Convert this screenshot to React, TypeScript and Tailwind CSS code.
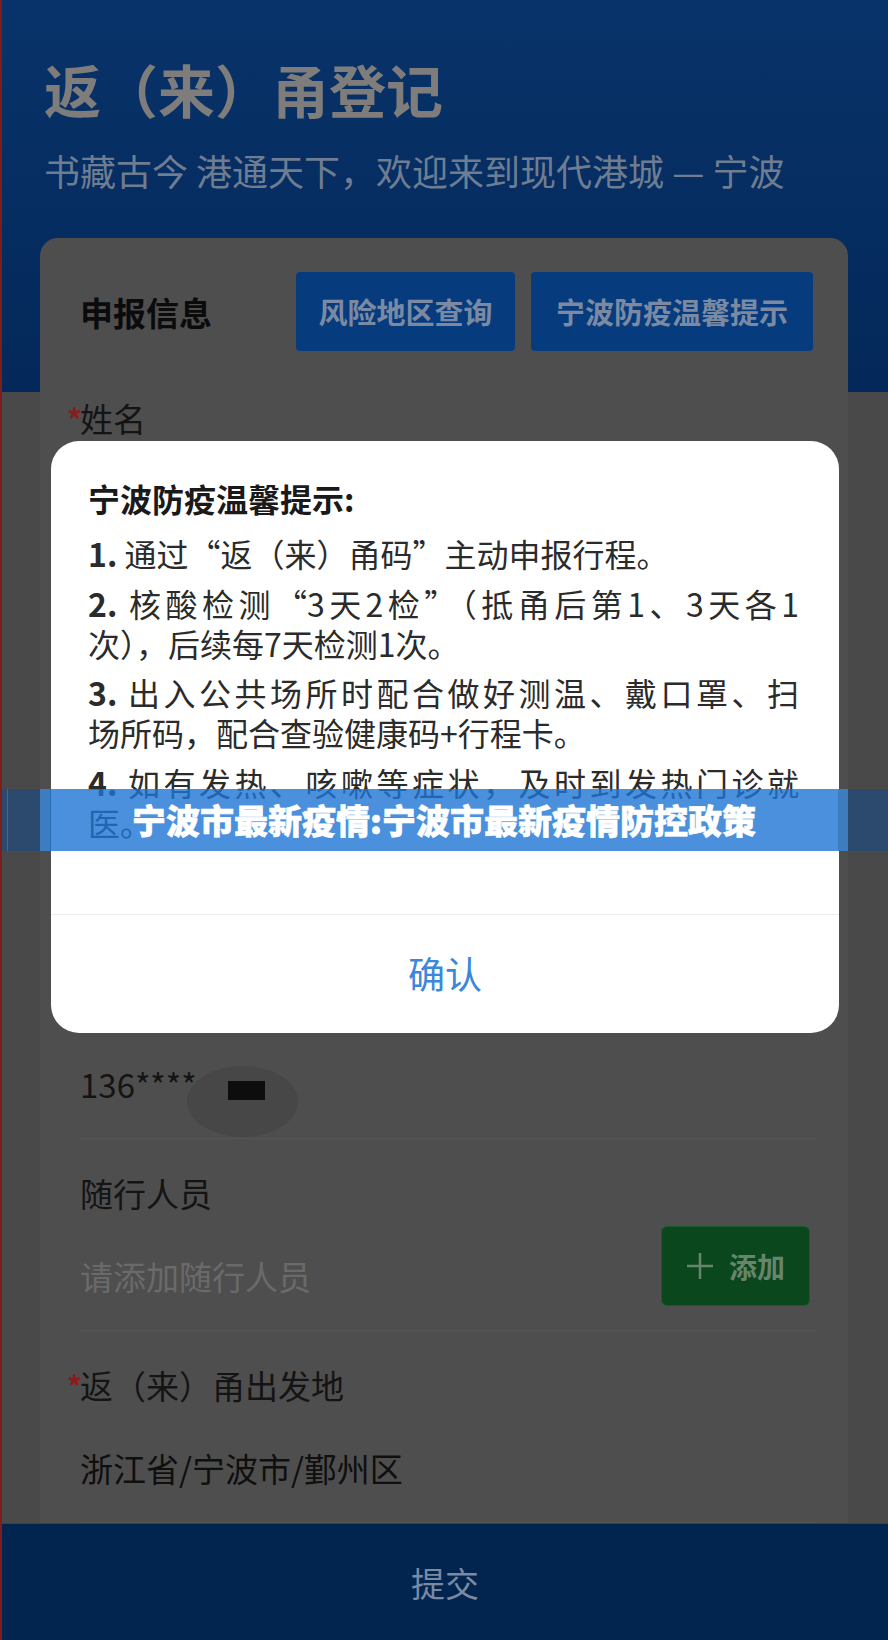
import React from "react";

function Field({
  label,
  required,
  children,
  top = "pt-[34px]",
}: {
  label: string;
  required?: boolean;
  children: React.ReactNode;
  top?: string;
}) {
  return (
    <div className={`${top} pb-[13px] border-b border-[#565656]`}>
      <div className="h-[40px] flex items-center text-[33px] leading-[40px] text-[#141414] -ml-[13px]">
        <span className="w-[13px] h-[40px] flex items-center text-[#8c1c1c] text-[30px] leading-[40px] font-bold">
          {required ? "*" : ""}
        </span>
        <span>{label}</span>
      </div>
      <div className="relative mt-[24px] h-[80px] flex items-center">{children}</div>
    </div>
  );
}

export default function App() {
  return (
    <div className="relative w-[888px] h-[1640px] overflow-hidden border-l-2 border-[#7d1d1d] bg-[linear-gradient(to_bottom,#08336a_0px,#042859_392px,#494949_392px)] font-['Noto_Sans_CJK_SC','Noto_Sans',sans-serif] flex flex-col">
      {/* Header */}
      <header className="pl-[42px] pt-[56px] shrink-0">
        <h1 className="text-[57px] leading-[64px] font-bold text-[#7f7d7b]">返（来）甬登记</h1>
        <p className="mt-[30px] text-[36px] leading-[40px] text-[#6e7d91]">
          书藏古今 港通天下，欢迎来到现代港城 — 宁波
        </p>
      </header>

      {/* Card */}
      <main className="mt-[48px] ml-[38px] w-[808px] flex-1 min-h-0 overflow-hidden rounded-t-[18px] bg-[#4e4e4e] pl-[40px] pr-[33px]">
        <div className="pt-[34px] flex items-center justify-between">
          <h2 className="text-[33px] leading-[40px] font-bold text-[#0b0b0b]">申报信息</h2>
          <div className="flex gap-[16px] mr-[2px]">
            <button className="w-[219px] h-[79px] rounded-[4px] bg-[#063c7e] text-[29px] font-bold text-[#7b8aa2]">
              风险地区查询
            </button>
            <button className="w-[282px] h-[79px] rounded-[4px] bg-[#063c7e] text-[29px] font-bold text-[#7b8aa2]">
              宁波防疫温馨提示
            </button>
          </div>
        </div>

        <div className="pt-[13px]">
          <Field label="姓名" required>
            <span className="text-[33px] text-[#141414]">王**</span>
          </Field>
          <Field label="证件类型" required>
            <span className="text-[33px] text-[#141414]">居民身份证</span>
          </Field>
          <Field label="证件号码" required top="pt-[41px]">
            <span className="text-[33px] text-[#141414]">3302**********1234</span>
          </Field>
          <Field label="手机号码" required>
            <div className="absolute left-[107px] top-[21px] w-[111px] h-[71px] rounded-[50%] bg-[#474747]" />
            <span className="relative text-[33px] text-[#141414]">136****</span>
            <div className="absolute left-[148px] top-[36px] w-[37px] h-[19px] bg-[#0d0d0d]" />
          </Field>
          <Field label="随行人员">
            <div className="flex-1 flex items-center justify-between h-full">
              <span className="text-[33px] text-[#6a6a6a]">请添加随行人员</span>
              <button className="self-start -mt-[11px] mr-[5px] w-[149px] h-[80px] rounded-[6px] border border-[#1a5a2c] bg-[#0a471d] flex items-center justify-center gap-[15px] text-[#68846d]">
                <svg width="28" height="28" viewBox="0 0 28 28" fill="none" stroke="currentColor" strokeWidth="2.5">
                  <path d="M14 1v26M1 14h26" />
                </svg>
                <span className="text-[28px] font-bold leading-none">添加</span>
              </button>
            </div>
          </Field>
          <Field label="返（来）甬出发地" required>
            <span className="text-[33px] text-[#0f0f0f]">浙江省/宁波市/鄞州区</span>
          </Field>
        </div>
      </main>

      {/* Submit bar */}
      <footer className="shrink-0 h-[117px] bg-[#022550] border-t border-[#164683] flex items-center justify-center">
        <span className="text-[34px] text-[#7a8aa3]">提交</span>
      </footer>

      {/* Modal */}
      <div className="absolute left-[49px] top-[441px] w-[788px] h-[592px] rounded-[28px] bg-white flex flex-col overflow-hidden">
        <div className="flex-1 pt-[35px] pl-[37px] pr-[40px]">
          <h3 className="text-[32px] leading-[44px] font-bold text-[#1a1a1a]">宁波防疫温馨提示:</h3>
          <div className="mt-[13px] text-[32px] leading-[40px] text-[#2b2b2b]">
            <p>
              <b>1.</b> 通过“返（来）甬码”主动申报行程。
            </p>
            <p className="mt-[10px] text-justify [text-align-last:justify]">
              <b>2.</b> 核酸检测“3天2检”（抵甬后第1、3天各1
            </p>
            <p>次），后续每7天检测1次。</p>
            <p className="mt-[9px] text-justify [text-align-last:justify]">
              <b>3.</b> 出入公共场所时配合做好测温、戴口罩、扫
            </p>
            <p>场所码，配合查验健康码+行程卡。</p>
            <p className="mt-[10px] text-justify [text-align-last:justify]">
              <b>4.</b> 如有发热、咳嗽等症状，及时到发热门诊就
            </p>
            <p>医。</p>
          </div>
        </div>
        <div className="h-[119px] shrink-0 border-t border-[#ececec] flex items-center justify-center">
          <span className="text-[37px] text-[#3b87da]">确认</span>
        </div>
      </div>

      {/* Banner */}
      <div className="absolute left-0 top-[789px] w-full h-[62px] flex">
        <div className="w-[5px] bg-[#2c4a6d]" />
        <div className="w-[1px] bg-[#3d6c9b]" />
        <div className="w-[32px] bg-[#2c4a6d]" />
        <div className="w-[10px] bg-[#3d7dbf]" />
        <div className="flex-1 bg-[#1d74d3]/80 flex items-center justify-center">
          <span className="text-[34px] leading-none font-black text-white [-webkit-text-stroke:0.6px_white]">
            宁波市最新疫情:宁波市最新疫情防控政策
          </span>
        </div>
        <div className="w-[10px] bg-[#3d7dbf]" />
        <div className="w-[40px] bg-[#2c4a6d]" />
      </div>
    </div>
  );
}
